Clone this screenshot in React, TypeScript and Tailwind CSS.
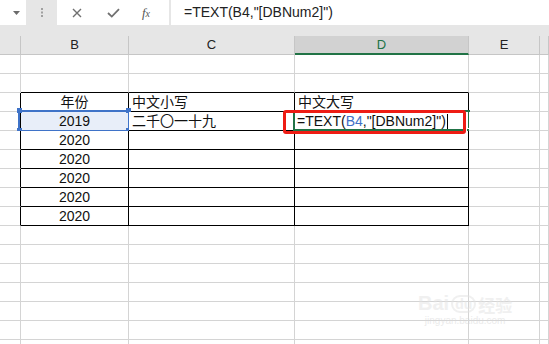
import React from "react";

const font = { fontFamily: '"Liberation Sans", Arial, "Noto Sans CJK SC", sans-serif' };

const tableRows: Record<number, [string, string, string]> = {
  3: ["年份", "中文小写", "中文大写"],
  4: ["2019", "二千〇一十九", ""],
  5: ["2020", "", ""],
  6: ["2020", "", ""],
  7: ["2020", "", ""],
  8: ["2020", "", ""],
  9: ["2020", "", ""],
};

function Cell({ r, c }: { r: number; c: number }) {
  const bBlack = c >= 1 && c <= 3 && r >= 2 && r <= 9;
  const rBlack = c >= 0 && c <= 3 && r >= 3 && r <= 9;
  const data = tableRows[r];
  let content: React.ReactNode = null;
  if (data && c >= 1 && c <= 3) {
    const t = data[c - 1];
    if (c === 1) {
      content = <div className="w-full text-center leading-[19px]">{t}</div>;
    } else if (c === 3 && r === 4) {
      content = (
        <div className="pl-[2px] leading-[19px] whitespace-nowrap flex items-center">
          <span>=TEXT(</span>
          <span className="text-[#3f6fc6]">B4</span>
          <span>,"[DBNum2]")</span>
          <span className="inline-block w-px h-[16px] bg-black ml-px" />
        </div>
      );
    } else {
      content = <div className="pl-[3px] leading-[18px] whitespace-nowrap">{t}</div>;
    }
  }
  return (
    <div
      className={
        "relative h-[19px] border-r border-b text-[14px] text-[#111] " +
        (bBlack ? "border-b-black " : "border-b-[#d4d4d4] ") +
        (rBlack ? "border-r-black " : "border-r-[#d4d4d4] ") +
        (r === 4 && c === 1 ? "bg-[#e8eef9]" : "bg-white")
      }
    >
      {content}
      {r === 4 && c === 1 && (
        <>
          <div className="absolute left-[-3px] top-[-2px] right-[-2px] bottom-[-2px] border-2 border-[#3f73c8]" />
          <div className="absolute left-[-4px] top-[-4px] w-[5px] h-[5px] bg-[#3f73c8]" />
          <div className="absolute right-[-3px] top-[-4px] w-[5px] h-[5px] bg-[#3f73c8]" />
          <div className="absolute left-[-4px] bottom-[-3px] w-[5px] h-[5px] bg-[#3f73c8]" />
          <div className="absolute right-[-3px] bottom-[-3px] w-[5px] h-[5px] bg-[#3f73c8]" />
        </>
      )}
      {r === 4 && c === 3 && (
        <>
          <div className="absolute left-[-2px] top-[-2px] right-[-2px] bottom-[-1px] border-2 border-[#217346]" />
          <div className="absolute right-[-3px] bottom-[-3px] w-[5px] h-[5px] bg-[#217346] border border-white" />
        </>
      )}
    </div>
  );
}

export default function App() {
  const rows = Array.from({ length: 16 }, (_, i) => i + 1);
  const cols = [0, 1, 2, 3, 4, 5];
  const headers = ["", "B", "C", "D", "E", ""];
  return (
    <div className="w-[549px] h-[344px] overflow-hidden bg-white relative" style={font}>
      {/* formula bar */}
      <div className="h-[25px] flex bg-[#e6e6e6]">
        <div className="w-[26px] bg-white flex items-center justify-end pr-[6px]">
          <svg width="7" height="4" viewBox="0 0 7 4">
            <path d="M0 0 L7 0 L3.5 4 Z" fill="#6b6b6b" />
          </svg>
        </div>
        <div className="w-[31px] flex items-center justify-center">
          <svg width="2" height="9" viewBox="0 0 2 9">
            <rect x="0" y="0" width="2" height="2" fill="#a0a0a0" />
            <rect x="0" y="3.5" width="2" height="2" fill="#a0a0a0" />
            <rect x="0" y="7" width="2" height="2" fill="#a0a0a0" />
          </svg>
        </div>
        <div className="w-[112px] bg-white flex items-center">
          <div className="w-[40px] flex justify-center">
            <svg width="10" height="10" viewBox="0 0 10 10">
              <path d="M1 1 L9 9 M9 1 L1 9" stroke="#707070" strokeWidth="1.4" />
            </svg>
          </div>
          <div className="w-[32px] flex justify-center">
            <svg width="13" height="10" viewBox="0 0 13 10">
              <path d="M1 5 L4.8 8.6 L12 1.2" stroke="#707070" strokeWidth="1.8" fill="none" />
            </svg>
          </div>
          <div className="w-[34px] flex justify-center">
            <span className="text-[13px] italic text-[#555]" style={{ fontFamily: '"Liberation Serif", serif' }}>
              f<span className="text-[10px]">x</span>
            </span>
          </div>
        </div>
        <div className="w-[1px]" />
        <div className="flex-1 bg-white flex items-center pl-[13px] text-[14px] text-[#222] ml-px">
          =TEXT(B4,"[DBNum2]")
        </div>
      </div>
      <div className="h-[11px] bg-[#e6e6e6]" />
      {/* column headers */}
      <div className="grid grid-cols-[21px_108px_166px_174px_71px_1fr] bg-[#e6e6e6]">
        {cols.map((c) => (
          <div
            key={c}
            className={
              "h-[19px] border-r border-r-[#c6c6c6] flex items-center justify-center text-[13px] " +
              (c === 3
                ? "bg-[#d2d2d2] text-[#217346] border-b-2 border-b-[#217346]"
                : "text-[#222] border-b border-b-[#c6c6c6]")
            }
          >
            {headers[c]}
          </div>
        ))}
      </div>
      {/* grid */}
      <div className="relative grid grid-cols-[21px_108px_166px_174px_71px_1fr]">
        {rows.map((r) => cols.map((c) => <Cell key={r + "-" + c} r={r} c={c} />))}
        {/* red annotation */}
        <div className="absolute left-[283px] top-[55px] w-[183px] h-[24px] border-[3px] border-[#ee1c14] rounded-[3px]" />
      </div>
      {/* watermark */}
      <div className="absolute left-[418px] top-[293px] flex flex-col items-center opacity-50 pointer-events-none">
        <div className="flex items-end text-[#e2e2e2] leading-none">
          <span className="text-[20px] font-bold">Bai</span>
          <span className="text-[14px] font-bold mx-[2px] border-2 border-[#e2e2e2] rounded-full px-[2px]">du</span>
          <span className="text-[17px] font-bold" style={{ fontFamily: '"Noto Sans CJK SC", sans-serif' }}>经验</span>
        </div>
        <div className="text-[10px] text-[#d8d8d8] leading-none mt-[3px]">jingyan.baidu.com</div>
      </div>
    </div>
  );
}
